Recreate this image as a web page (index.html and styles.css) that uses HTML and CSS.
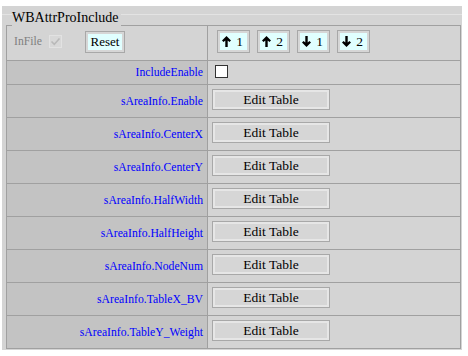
FILE: index.html
```html
<!DOCTYPE html>
<html>
<head>
<meta charset="utf-8">
<link rel="stylesheet" href="styles.css">
</head>
<body>
<div class="panel">
  <div class="head"><span class="title">WBAttrProInclude</span></div>
  <table class="grid">
    <colgroup><col class="c1"><col class="c2"></colgroup>
    <tr class="r-top">
      <td class="lc lc-top">
        <div class="infile">
          <span class="infile-label">InFile</span>
          <span class="chk chk-dis"><svg width="11" height="11" viewBox="0 0 11 11"><path d="M1.5 5.5 L4.3 8.3 L9.5 2.5" fill="none" stroke="#b9b9b9" stroke-width="1.6"/></svg></span>
          <span class="btn btn-cyan btn-reset">Reset</span>
        </div>
      </td>
      <td class="rc">
        <div class="arrows">
          <span class="btn btn-cyan btn-arr"><svg class="arr" width="9" height="11" viewBox="0 0 9 11"><path d="M4.5 0 L9 4.6 L7.4 6.1 L5.7 4.4 V11 H3.3 V4.4 L1.6 6.1 L0 4.6 Z"/></svg><span>1</span></span>
          <span class="btn btn-cyan btn-arr"><svg class="arr" width="9" height="11" viewBox="0 0 9 11"><path d="M4.5 0 L9 4.6 L7.4 6.1 L5.7 4.4 V11 H3.3 V4.4 L1.6 6.1 L0 4.6 Z"/></svg><span>2</span></span>
          <span class="btn btn-cyan btn-arr"><svg class="arr" width="9" height="11" viewBox="0 0 9 11"><path d="M4.5 11 L9 6.4 L7.4 4.9 L5.7 6.6 V0 H3.3 V6.6 L1.6 4.9 L0 6.4 Z"/></svg><span>1</span></span>
          <span class="btn btn-cyan btn-arr"><svg class="arr" width="9" height="11" viewBox="0 0 9 11"><path d="M4.5 11 L9 6.4 L7.4 4.9 L5.7 6.6 V0 H3.3 V6.6 L1.6 4.9 L0 6.4 Z"/></svg><span>2</span></span>
        </div>
      </td>
    </tr>
    <tr class="r-en">
      <td class="lc">IncludeEnable</td>
      <td class="rc"><span class="chk chk-on"></span></td>
    </tr>
    <tr class="r"><td class="lc">sAreaInfo.Enable</td><td class="rc"><span class="btn btn-edit">Edit Table</span></td></tr>
    <tr class="r"><td class="lc">sAreaInfo.CenterX</td><td class="rc"><span class="btn btn-edit">Edit Table</span></td></tr>
    <tr class="r"><td class="lc">sAreaInfo.CenterY</td><td class="rc"><span class="btn btn-edit">Edit Table</span></td></tr>
    <tr class="r"><td class="lc">sAreaInfo.HalfWidth</td><td class="rc"><span class="btn btn-edit">Edit Table</span></td></tr>
    <tr class="r"><td class="lc">sAreaInfo.HalfHeight</td><td class="rc"><span class="btn btn-edit">Edit Table</span></td></tr>
    <tr class="r"><td class="lc">sAreaInfo.NodeNum</td><td class="rc"><span class="btn btn-edit">Edit Table</span></td></tr>
    <tr class="r"><td class="lc">sAreaInfo.TableX_BV</td><td class="rc"><span class="btn btn-edit">Edit Table</span></td></tr>
    <tr class="r"><td class="lc">sAreaInfo.TableY_Weight</td><td class="rc"><span class="btn btn-edit">Edit Table</span></td></tr>
  </table>
</div>
</body>
</html>
```
FILE: styles.css
```css
html, body {
  margin: 0;
  padding: 0;
  background: #ffffff;
}
body {
  font-family: "Liberation Serif", "Times New Roman", serif;
  color: #000;
}
.panel {
  margin: 6px 0 0 2px;
  width: 460px;
  height: 344px;
  box-sizing: border-box;
  background: #d4d4d4;
  padding: 0 3px 0 4px;
}
.head {
  height: 19px;
  box-sizing: border-box;
  padding: 2px 0 0 6px;
  margin-left: -4px;
  padding-left: 10px;
  margin-right: -3px;
  background: linear-gradient(#d4d4d4 0 8px, #e3e3e3 8px 9px, #d4d4d4 9px);
}
.title {
  display: inline-block;
  font-size: 14px;
  line-height: 16px;
  background: #d4d4d4;
  padding-right: 2px;
}
.grid {
  border-collapse: collapse;
  table-layout: fixed;
  width: 454px;
  border: 1px solid #a0a0a0;
}
.c1 { width: 201px; }
.c2 { width: 253px; }
.grid td {
  border: 1px solid #a0a0a0;
  padding: 0;
  vertical-align: middle;
}
.lc {
  background: #c3c3c3;
  color: #0000ff;
  font-size: 11.7px;
  text-align: right;
  padding-right: 4px !important;
}
.lc-top {
  background: #d4d4d4;
  text-align: left;
}
.rc {
  background: #d4d4d4;
  padding-left: 4px !important;
}
.r-top td { height: 34px; }
.r-en td { height: 23px; }
.r td { height: 32px; }

.infile {
  display: flex;
  align-items: center;
  padding-left: 7px;
  margin-bottom: 3px;
}
.infile-label {
  color: #808080;
  font-size: 11.7px;
}
.chk {
  display: inline-block;
  width: 13px;
  height: 13px;
  box-sizing: border-box;
}
.chk-dis {
  margin-left: 7px;
  border: 1px solid #e2e2e2;
  background: #d8d8d8;
  display: flex;
  align-items: center;
  justify-content: center;
}
.chk-on {
  display: block;
  border: 1px solid #333333;
  background: #ffffff;
  margin: 0 0 3px 3px;
}
.btn {
  display: inline-flex;
  align-items: center;
  justify-content: center;
  box-sizing: border-box;
  font-size: 13.5px;
  color: #000;
}
.btn-cyan {
  background: #e0ffff;
  border: 1px solid #a8a8a8;
  box-shadow: inset 0 0 0 2px #d6d6d6;
}
.btn-reset {
  margin-left: 23px;
  width: 40px;
  height: 22px;
  font-size: 13px;
}
.arrows {
  display: flex;
  gap: 7px;
  padding-left: 5px;
  margin-bottom: 3px;
}
.btn-arr {
  width: 33px;
  height: 23px;
  gap: 5px;
  padding-right: 2px;
}
.arr { display: block; }
.arr path { fill: #000; }
.btn-edit {
  display: flex;
  width: 118px;
  height: 21px;
  background: #d6d6d6;
  border: 1px solid #a8a8a8;
  box-shadow: inset 0 0 0 2px #e6e6e6;
  margin-bottom: 3px;
}
```
